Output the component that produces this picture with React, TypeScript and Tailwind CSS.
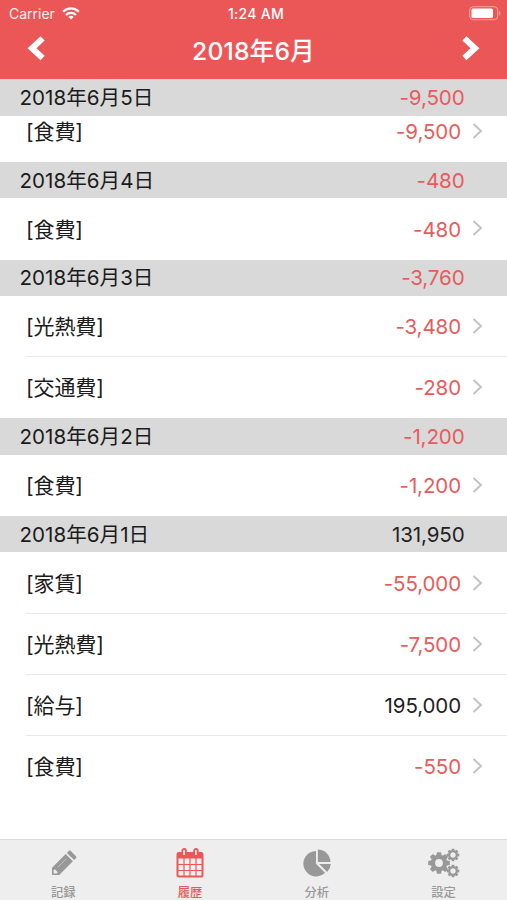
import type { ReactNode } from "react";

type Row = { label: string; amount: string };
type Section = { title: string; total: string; rows: Row[] };

const sections: Section[] = [
  { title: "2018年6月5日", total: "-9,500", rows: [{ label: "[食費]", amount: "-9,500" }] },
  { title: "2018年6月4日", total: "-480", rows: [{ label: "[食費]", amount: "-480" }] },
  {
    title: "2018年6月3日",
    total: "-3,760",
    rows: [
      { label: "[光熱費]", amount: "-3,480" },
      { label: "[交通費]", amount: "-280" },
    ],
  },
  { title: "2018年6月2日", total: "-1,200", rows: [{ label: "[食費]", amount: "-1,200" }] },
  {
    title: "2018年6月1日",
    total: "131,950",
    rows: [
      { label: "[家賃]", amount: "-55,000" },
      { label: "[光熱費]", amount: "-7,500" },
      { label: "[給与]", amount: "195,000" },
      { label: "[食費]", amount: "-550" },
    ],
  },
];

const tone = (amount: string) => (amount.startsWith("-") ? "text-[#e85b5b]" : "text-[#222222]");

function StatusBar() {
  return (
    <div className="flex h-[27px] items-center justify-between pl-[9px] pr-[6px] text-[14px] text-white">
      <div className="flex flex-1 items-center gap-[7px]">
        <span className="opacity-90">Carrier</span>
        <svg width="18" height="13" viewBox="0 0 18 13" fill="none" stroke="#fff" strokeWidth="2.2">
          <path d="M1.2 4.7a11 11 0 0 1 15.6 0M4 7.9a7 7 0 0 1 10 0" />
          <path d="M9 12.5 6.4 10a3.7 3.7 0 0 1 5.2 0z" fill="#fff" stroke="none" />
        </svg>
      </div>
      <span className="pl-[2px] text-[14px] font-medium tracking-[0.3px]">1:24 AM</span>
      <div className="flex flex-1 justify-end">
        <svg width="32" height="15" viewBox="0 0 32 15" fill="none">
          <rect x=".7" y=".7" width="28" height="13" rx="3.5" stroke="#fff" strokeOpacity=".45" />
          <rect x="2.5" y="2.5" width="21.5" height="9.5" rx="1.5" fill="#fff" />
          <path d="M30.2 5v4.4c1.7-.8 1.7-3.6 0-4.4z" fill="#fff" fillOpacity=".5" />
        </svg>
      </div>
    </div>
  );
}

function NavArrow({ flip = false }: { flip?: boolean }) {
  return (
    <svg width="18" height="28" viewBox="0 0 18 28" className={flip ? "-scale-x-100" : ""}>
      <path d="M15.6 2.4 5 12.2 15.6 22" fill="none" stroke="#fff" strokeWidth="6" />
    </svg>
  );
}

function Header() {
  return (
    <header className="h-[79px] shrink-0 bg-[#eb5757]">
      <StatusBar />
      <div className="flex h-[46px] items-center justify-between pl-[27px] pr-[27px]">
        <NavArrow />
        <h1 className="pt-[3px] text-[24.7px] font-medium tracking-[0.15px] text-white">2018年6月</h1>
        <NavArrow flip />
      </div>
    </header>
  );
}

function Chevron() {
  return (
    <svg width="12" height="18" viewBox="0 0 12 18" className="ml-[11px] mr-[23px]">
      <path d="m1.5 2 7.5 7-7.5 7" fill="none" stroke="#c3c3c7" strokeWidth="2" />
    </svg>
  );
}

function SectionView({ section, clipped }: { section: Section; clipped: boolean }) {
  return (
    <section>
      <div className="flex h-[36.5px] items-center justify-between bg-[#d9d9d9] pl-[19.5px] pr-[42.5px] pt-[2px] text-[20.6px] text-[#1b1b1b]">
        <span>{section.title}</span>
        <span className={`tracking-[-0.15px] ${tone(section.total)}`}>{section.total}</span>
      </div>
      {section.rows.map((row, i) => (
        <div
          key={row.label}
          className={`flex flex-col justify-end overflow-hidden ${clipped ? "h-[46.4px]" : "h-[61.15px]"}`}
        >
          <div
            className={`ml-[26px] flex h-[61.15px] shrink-0 items-center border-b ${
              i < section.rows.length - 1 ? "border-[#e8e8e8]" : "border-transparent"
            }`}
          >
            <span className="flex-1 pt-[2px] text-[21px] tracking-[-0.1px] text-[#1b1b1b]">{row.label}</span>
            <span className={`pt-[3px] text-[20.5px] tracking-[-0.1px] ${tone(row.amount)}`}>{row.amount}</span>
            <Chevron />
          </div>
        </div>
      ))}
    </section>
  );
}

function Tab({ label, active = false, children }: { label: string; active?: boolean; children: ReactNode }) {
  return (
    <div className={`flex flex-1 flex-col items-center pt-[6px] ${active ? "text-[#eb5757]" : "text-[#989898]"}`}>
      <div className="flex h-[34px] items-center justify-center">{children}</div>
      <span className="mt-[6px] text-[12.3px] leading-[14px] font-medium">{label}</span>
    </div>
  );
}

function Gear({ cx, cy, r, hole }: { cx: number; cy: number; r: number; hole: number }) {
  const angles = Array.from({ length: 8 }, (_, i) => i * 45);
  return (
    <g transform={`translate(${cx} ${cy})`}>
      <circle r={(r * 0.76 + hole) / 2} fill="none" stroke="currentColor" strokeWidth={r * 0.76 - hole} />
      {angles.map((a) => (
        <path
          key={a}
          transform={`rotate(${a})`}
          d={`M${-r * 0.25} ${-r * 0.65}L${-r * 0.19} ${-r}H${r * 0.19}L${r * 0.25} ${-r * 0.65}z`}
          fill="currentColor"
        />
      ))}
    </g>
  );
}

function TabBar() {
  return (
    <nav className="flex h-[61px] shrink-0 border-t border-[#dcdcdc] bg-[#eeeeee]">
      <Tab label="記録">
        <svg width="26" height="26" viewBox="0 0 26 26" fill="currentColor" className="ml-[2px]">
          <path d="M1 25v-7.2L14.7 4.1l7.2 7.2L8.2 25z" />
          <path d="m15.9 2.9 1.9-1.9c.6-.6 1.4-.6 2 0L25 6.2c.6.6.6 1.4 0 2l-1.9 1.9z" />
          <path d="M2.6 20.4v3h3l1.2-1.2-3-3z" fill="#eee" />
          <path d="m6.6 17.4 8.6-8.6" fill="none" stroke="#c4c4c4" strokeWidth=".9" />
        </svg>
      </Tab>
      <Tab label="履歴" active>
        <svg width="28" height="30" viewBox="0 0 28 30" fill="none" stroke="currentColor">
          <rect x="1.5" y="5" width="25" height="23.5" rx="1.5" fill="#faf0f0" strokeWidth="2" />
          <path d="M1.5 5h25v5h-25z" fill="currentColor" />
          <path d="M2 16.5h24M2 22.5h24M8 10v18M14 10v18M20 10v18" strokeWidth="1.2" />
          <rect x="6.3" y="1" width="3.6" height="7" rx="1.8" fill="#faf0f0" strokeWidth="1.8" />
          <rect x="18.1" y="1" width="3.6" height="7" rx="1.8" fill="#faf0f0" strokeWidth="1.8" />
        </svg>
      </Tab>
      <Tab label="分析">
        <svg width="28" height="28" viewBox="0 0 28 28" fill="currentColor">
          <path d="M13 2v12.7l9 9A12.7 12.7 0 1 1 13 2z" />
          <path d="M14.9.5A12.6 12.6 0 0 1 27.4 13H14.9z" />
          <path d="M16.2 15h11.6a13 13 0 0 1-3.6 8z" />
        </svg>
      </Tab>
      <Tab label="設定">
        <svg width="32" height="30" viewBox="0 0 32 30">
          <Gear cx={11} cy={15} r={10.8} hole={3.9} />
          <Gear cx={25} cy={7} r={6.3} hole={2.7} />
          <Gear cx={25} cy={23} r={6.3} hole={2.7} />
        </svg>
      </Tab>
    </nav>
  );
}

export default function App() {
  return (
    <div className="flex h-[900px] w-[507px] flex-col overflow-hidden bg-white font-['Inter','Noto_Sans_CJK_JP',sans-serif]">
      <Header />
      <main className="min-h-0 flex-1 overflow-hidden">
        {sections.map((s, i) => (
          <SectionView key={s.title} section={s} clipped={i === 0} />
        ))}
      </main>
      <TabBar />
    </div>
  );
}
